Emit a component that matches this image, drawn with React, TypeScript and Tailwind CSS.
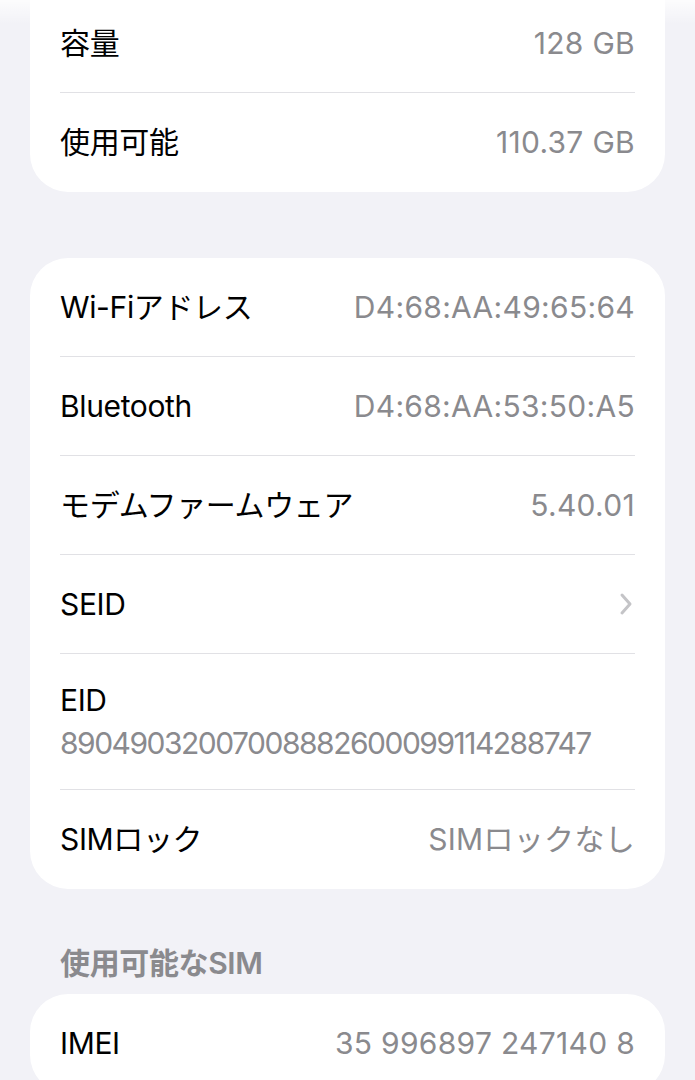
import React from 'react'

type Row = { label: string; value?: string; chevron?: boolean; sub?: string }

const card1: Row[] = [
  { label: '容量', value: '128 GB' },
  { label: '使用可能', value: '110.37 GB' },
]

const card2: Row[] = [
  { label: 'Wi-Fiアドレス', value: 'D4:68:AA:49:65:64' },
  { label: 'Bluetooth', value: 'D4:68:AA:53:50:A5' },
  { label: 'モデムファームウェア', value: '5.40.01' },
  { label: 'SEID', chevron: true },
  { label: 'EID', sub: '89049032007008882600099114288747' },
  { label: 'SIMロック', value: 'SIMロックなし' },
]

const card3: Row[] = [{ label: 'IMEI', value: '35 996897 247140 8' }]

function Chevron() {
  return (
    <svg width="14" height="24" viewBox="0 0 14 24" fill="none" className="mr-[2px]">
      <path d="M3 3 L11 12 L3 21" stroke="#c4c4c7" strokeWidth="3" strokeLinecap="round" strokeLinejoin="round" />
    </svg>
  )
}

function SettingsRow({ row, last }: { row: Row; last: boolean }) {
  const border = last ? '' : 'border-b border-[#e1e1e5]'
  if (row.sub) {
    return (
      <div className={`h-[136px] flex flex-col justify-center ${border}`}>
        <div className="text-black leading-[38px]">{row.label}</div>
        <div className="text-[#8a8a8e] leading-[38px] mt-[5px] tracking-[-0.05em]">{row.sub}</div>
      </div>
    )
  }
  return (
    <div className={`h-[99px] flex items-center justify-between ${border}`}>
      <span className="text-black">{row.label}</span>
      {row.chevron ? <Chevron /> : <span className="text-[#8a8a8e] tracking-[0.01em]">{row.value}</span>}
    </div>
  )
}

function Card({ rows, className = '' }: { rows: Row[]; className?: string }) {
  return (
    <div className={`mx-[30px] bg-white rounded-[38px] px-[30px] ${className}`}>
      {rows.map((r, i) => (
        <SettingsRow key={r.label} row={r} last={i === rows.length - 1} />
      ))}
    </div>
  )
}

export default function App() {
  return (
    <div
      className="relative w-[695px] h-[1080px] overflow-hidden bg-[#f2f2f7] text-[30px] tracking-[-0.012em]"
      style={{ fontFamily: '"Inter", "Noto Sans CJK JP", sans-serif' }}
    >
      <Card rows={card1} className="mt-[-6px] rounded-t-none" />
      <Card rows={card2} className="mt-[66px]" />
      <div className="h-[105px] flex items-end px-[60px] pb-[13px]">
        <span className="text-[#8a8a8e] font-semibold leading-[36px]">使用可能なSIM</span>
      </div>
      <Card rows={card3} />
      <div className="absolute top-0 left-0 right-0 h-[24px] bg-gradient-to-b from-white/80 to-transparent pointer-events-none" />
    </div>
  )
}
